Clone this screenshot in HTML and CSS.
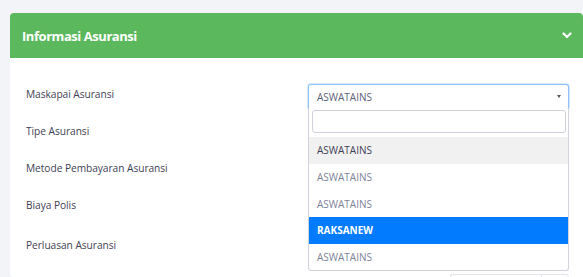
FILE: index.html
```html
<!DOCTYPE html>
<html lang="id">
<head>
<meta charset="utf-8">
<title>Informasi Asuransi</title>
<link rel="stylesheet" href="styles.css">
</head>
<body>
<div class="card">
  <div class="card-header">
    <span class="card-title">Informasi Asuransi</span>
    <svg class="chevron" width="10" height="7" viewBox="0 0 10 7"><path d="M1.5 1.5 L5 5 L8.5 1.5" fill="none" stroke="#fff" stroke-width="2.2" stroke-linecap="round" stroke-linejoin="round"/></svg>
  </div>
  <div class="card-body">
    <div class="row r1">
      <div class="label">Maskapai Asuransi</div>
      <div class="control">
        <div class="select">
          <span class="select-value">ASWATAINS</span>
          <span class="caret"></span>
        </div>
        <div class="dropdown">
          <div class="search-wrap"><input class="search" type="text"></div>
          <ul class="options">
            <li class="option hover">ASWATAINS</li>
            <li class="option">ASWATAINS</li>
            <li class="option">ASWATAINS</li>
            <li class="option selected">RAKSANEW</li>
            <li class="option">ASWATAINS</li>
          </ul>
        </div>
      </div>
    </div>
    <div class="row r2"><div class="label">Tipe Asuransi</div></div>
    <div class="row r3"><div class="label">Metode Pembayaran Asuransi</div></div>
    <div class="row r4"><div class="label">Biaya Polis</div></div>
    <div class="row r5"><div class="label">Perluasan Asuransi</div></div>
    <div class="row r6">
      <div class="label"></div>
      <div class="control">
        <div class="input-group"><span class="ig-main"></span><span class="ig-addon"></span></div>
      </div>
    </div>
  </div>
</div>
</body>
</html>
```
FILE: styles.css
```css
* { box-sizing: border-box; }
html, body { margin: 0; padding: 0; overflow: hidden; }
body {
  background: #f3f4f8;
  font-family: "Open Sans", "Noto Sans", sans-serif;
  width: 583px;
  height: 277px;
}
.card {
  margin: 13px -20px 0 10px;
  background: #fff;
  border-radius: 4px;
}
.card-header {
  height: 45px;
  background: #5cb85c;
  border-radius: 4px 4px 0 0;
  display: flex;
  align-items: center;
  padding: 0 0 0 12px;
  width: 573px;
}
.card-title {
  color: #fff;
  font-weight: 700;
  font-size: 13px;
  letter-spacing: -0.45px;
}
.chevron {
  margin-left: auto;
  margin-right: 11px;
}
.card-body {
  padding: 26px 0 0 16px;
  height: 219px;
  overflow: hidden;
}
.row {
  display: flex;
  align-items: flex-start;
}
.r1, .r2, .r3 { height: 37px; }
.r4 { height: 40px; }
.r5 { height: 39px; }
.label {
  width: 282px;
  flex: none;
  padding-top: 2px;
  line-height: 16px;
  font-size: 10.2px;
  letter-spacing: -0.05px;
  color: #3f4254;
}
.control {
  width: 261px;
  position: relative;
}
.select {
  height: 24px;
  border: 1px solid #8fc1f7;
  border-bottom: none;
  border-radius: 3px 3px 0 0;
  display: flex;
  align-items: center;
  padding: 0 0 0 8px;
  box-shadow: 0 0 0 1px rgba(143,193,247,0.35);
}
.select-value {
  font-size: 10px;
  color: #5e6278;
}
.caret {
  margin-left: auto;
  margin-right: 7px;
  width: 0;
  height: 0;
  border-left: 2.5px solid transparent;
  border-right: 2.5px solid transparent;
  border-top: 3px solid #555;
}
.dropdown {
  position: absolute;
  top: 24px;
  left: 0;
  width: 261px;
  background: #fff;
  border: 1px solid #d0d3dc;
  border-top: none;
  border-radius: 0 0 3px 3px;
  z-index: 5;
}
.search-wrap { padding: 2px 2px 4px 3px; }
.search {
  display: block;
  width: 100%;
  height: 23px;
  border: 1px solid #cfd2da;
  border-radius: 3px;
  outline: none;
  margin: 0;
}
.options {
  list-style: none;
  margin: 0;
  padding: 0;
}
.option {
  height: 26.67px;
  display: flex;
  align-items: center;
  padding-left: 8px;
  font-size: 10px;
  color: #7e8299;
}
.option.hover {
  background: #f1f1f2;
  color: #3f4254;
}
.option.selected {
  background: #037bfe;
  color: #fff;
  font-weight: 700;
}
.r6 { height: 20px; }
.input-group {
  margin: 0 0 0 142px;
  display: flex;
  height: 20px;
  width: 119px;
}
.ig-main {
  flex: 1;
  border: 1px solid #e2e2f0;
  border-right: none;
  border-radius: 3px 0 0 3px;
}
.ig-addon {
  width: 28px;
  border: 1px solid #e2e2f0;
  border-radius: 0 3px 3px 0;
}
```
